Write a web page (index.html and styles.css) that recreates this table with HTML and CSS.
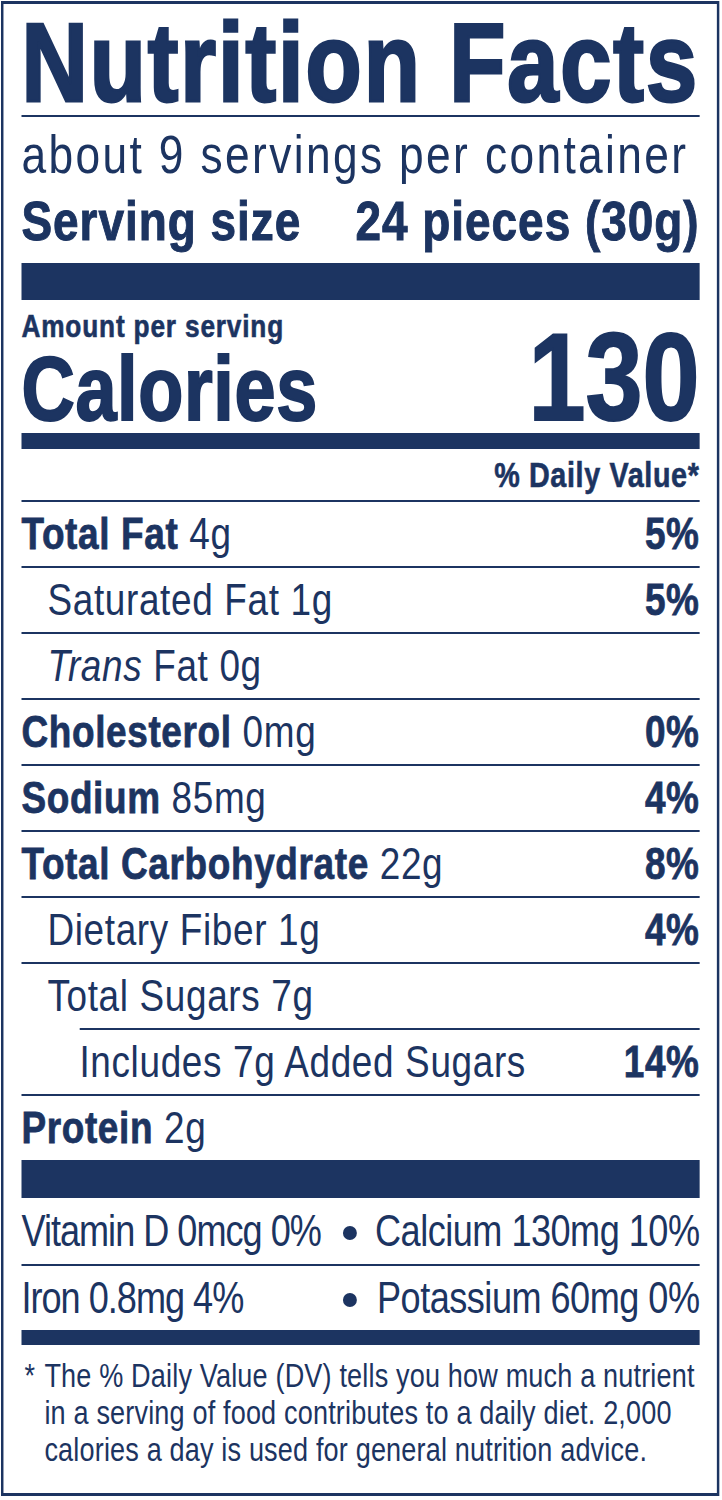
FILE: index.html
```html
<!DOCTYPE html>
<html lang="en">
<head>
<meta charset="utf-8">
<title>Nutrition Facts</title>
<link rel="stylesheet" href="styles.css">
</head>
<body>
<main class="page">
<section class="label">
  <h1 class="title">Nutrition Facts</h1>
  <div class="rule"></div>
  <div class="servings">about 9 servings per container</div>
  <div class="serving-size"><span>Serving size</span><span>24 pieces (30g)</span></div>
  <div class="bar bar-lg"></div>
  <div class="calories">
    <div class="cal-left">
      <div class="amount">Amount per serving</div>
      <div class="cal-label">Calories</div>
    </div>
    <div class="cal-value">130</div>
  </div>
  <div class="bar bar-md"></div>
  <div class="dv-head">% Daily Value*</div>
  <div class="row"><span><b>Total Fat</b> 4g</span><b>5%</b></div>
  <div class="row sub"><span>Saturated Fat 1g</span><b>5%</b></div>
  <div class="row sub"><span><i>Trans</i> Fat 0g</span></div>
  <div class="row"><span><b>Cholesterol</b> 0mg</span><b>0%</b></div>
  <div class="row"><span><b>Sodium</b> 85mg</span><b>4%</b></div>
  <div class="row"><span><b>Total Carbohydrate</b> 22g</span><b>8%</b></div>
  <div class="row sub"><span>Dietary Fiber 1g</span><b>4%</b></div>
  <div class="row sub"><span>Total Sugars 7g</span></div>
  <div class="row sub2"><span>Includes 7g Added Sugars</span><b>14%</b></div>
  <div class="row"><span><b>Protein</b> 2g</span></div>
  <div class="bar bar-xl"></div>
  <div class="minerals">
    <div class="mrow first">
      <span>Vitamin D 0mcg 0%</span>
      <span class="mright"><span class="dot"></span><span class="mval">Calcium 130mg 10%</span></span>
    </div>
    <div class="mrow">
      <span>Iron 0.8mg 4%</span>
      <span class="mright"><span class="dot"></span><span class="mval">Potassium 60mg 0%</span></span>
    </div>
  </div>
  <div class="bar bar-sm"></div>
  <div class="footnote">
    <span class="star">*</span>
    <p>The % Daily Value (DV) tells you how much a nutrient<br>in a serving of food contributes to a daily diet. 2,000<br>calories a day is used for general nutrition advice.</p>
  </div>
</section>
</main>
</body>
</html>
```

FILE: styles.css
```css
* {
  box-sizing: border-box;
  margin: 0;
  padding: 0;
}

html, body {
  background: #ffffff;
  overflow: hidden;
}

body {
  margin: 0;
  font-family: "Liberation Sans", Arial, sans-serif;
  color: #1c3461;
}

.page {
  display: block;
  width: 722px;
  height: 1500px;
  overflow: clip;
}

/* The label is laid out at full width and condensed horizontally,
   imitating a condensed typeface (Arial Narrow = 82% of Arial). */
.label {
  width: 875.6px;
  height: 1495px;
  margin: 1px 0 0 1px;
  border-style: solid;
  border-color: #1c3461;
  border-width: 3px 3.66px;
  padding: 0 20.73px 0 21.95px;
  transform: scaleX(0.82);
  transform-origin: 0 0;
}

.title {
  height: 111px;
  padding-top: 7px;
  font-size: 112px;
  line-height: 104px;
  font-weight: 700;
  letter-spacing: 2.4px;
  white-space: nowrap;
  -webkit-text-stroke: 3px #1c3461;
}

.rule {
  height: 2px;
  background: #1c3461;
}

.servings {
  height: 64px;
  padding-top: 10px;
  font-size: 54px;
  line-height: 54px;
  font-weight: 400;
  letter-spacing: 2.9px;
  white-space: nowrap;
}

.serving-size {
  display: flex;
  justify-content: space-between;
  height: 82px;
  padding-top: 12px;
  font-size: 56px;
  line-height: 56px;
  font-weight: 700;
  letter-spacing: 1.2px;
  white-space: nowrap;
  -webkit-text-stroke: 1px #1c3461;
}

.bar {
  background: #1c3461;
}

.bar-lg { height: 37px; }
.bar-md { height: 16px; }
.bar-xl { height: 38px; }
.bar-sm { height: 15px; }

.calories {
  display: flex;
  justify-content: space-between;
  align-items: flex-end;
  height: 133px;
}

.amount {
  padding-top: 10px;
  font-size: 32px;
  line-height: 32px;
  font-weight: 700;
  letter-spacing: 1px;
  -webkit-text-stroke: 0.6px #1c3461;
}

.cal-label {
  padding-top: 3px;
  font-size: 90px;
  line-height: 88px;
  font-weight: 700;
  letter-spacing: 0.8px;
  -webkit-text-stroke: 2px #1c3461;
}

.cal-value {
  font-size: 125px;
  line-height: 113px;
  font-weight: 700;
  -webkit-text-stroke: 2px #1c3461;
}

.dv-head {
  height: 51px;
  padding-top: 8px;
  text-align: right;
  font-size: 35px;
  line-height: 35px;
  font-weight: 700;
  letter-spacing: 0.8px;
  -webkit-text-stroke: 0.6px #1c3461;
}

.row {
  display: flex;
  justify-content: space-between;
  height: 66px;
  border-top: 2px solid #1c3461;
  font-size: 45px;
  line-height: 64px;
  letter-spacing: 0.8px;
  white-space: nowrap;
}

.row b {
  font-weight: 700;
  -webkit-text-stroke: 0.8px #1c3461;
}

.row.sub {
  padding-left: 31.7px;
}

.row.sub2 {
  margin-left: 70.7px;
}

.minerals {
  font-size: 44px;
  letter-spacing: -1.2px;
  white-space: nowrap;
}

.mrow {
  display: grid;
  grid-template-columns: 392px 1fr;
  height: 64px;
  line-height: 64px;
}

.mrow.first {
  height: 68px;
  line-height: 66px;
  border-bottom: 2px solid #1c3461;
}

.mright {
  display: flex;
  justify-content: space-between;
  align-items: center;
}

.mval {
  letter-spacing: -0.6px;
}

.dot {
  display: block;
  width: 17px;
  height: 14px;
  margin-top: 4px;
  border-radius: 50%;
  background: #1c3461;
}

.footnote {
  display: flex;
  padding-top: 12px;
  font-size: 33px;
  line-height: 37px;
  letter-spacing: 0.2px;
  white-space: nowrap;
}

.star {
  width: 28px;
  flex: none;
  padding-left: 3.66px;
}
```
